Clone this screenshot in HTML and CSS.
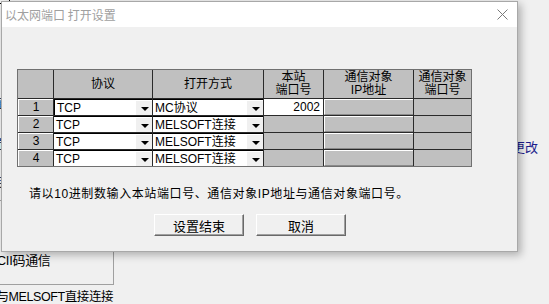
FILE: index.html
```html
<!DOCTYPE html>
<html lang="zh-CN">
<head>
    <meta charset="UTF-8">
    <title>以太网端口 打开设置</title>
    <link rel="stylesheet" href="styles.css">
</head>
<body>

<div class="desk">
    <span class="corner"></span>
    <span class="peek peek-a">值</span>
    <span class="peek peek-b">置</span>
    <span class="peek peek-c">连</span>
    <span class="peek peek-d">世</span>
    <div class="back-box"><span class="back-text">ASCII码通信</span></div>
    <div class="back-line">以太网上与MELSOFT直接连接</div>
    <span class="back-link">更改</span>
</div>

<div class="dialog">
    <div class="titlebar">
        <span class="title">以太网端口 打开设置</span>
        <svg class="close" width="11" height="11" viewBox="0 0 11 11">
            <path d="M0.5 0.5 L10.5 10.5 M10.5 0.5 L0.5 10.5" stroke="#7a7a7a" stroke-width="1" fill="none"/>
        </svg>
    </div>

    <div class="dialog-body">
        <div class="grid">
            <div class="hd"></div>
            <div class="hd">协议</div>
            <div class="hd">打开方式</div>
            <div class="hd two">本站<br>端口号</div>
            <div class="hd two">通信对象<br>IP地址</div>
            <div class="hd two">通信对象<br>端口号</div>

            <div class="num">1</div>
            <div class="combo focus"><span>TCP</span><i class="arrow"></i></div>
            <div class="combo"><span>MC协议</span><i class="arrow"></i></div>
            <div class="port">2002</div>
            <div class="raised"></div>
            <div class="flat"></div>

            <div class="num">2</div>
            <div class="combo"><span>TCP</span><i class="arrow"></i></div>
            <div class="combo"><span>MELSOFT连接</span><i class="arrow"></i></div>
            <div class="flat"></div>
            <div class="raised"></div>
            <div class="flat"></div>

            <div class="num">3</div>
            <div class="combo"><span>TCP</span><i class="arrow"></i></div>
            <div class="combo"><span>MELSOFT连接</span><i class="arrow"></i></div>
            <div class="flat"></div>
            <div class="raised"></div>
            <div class="flat"></div>

            <div class="num">4</div>
            <div class="combo"><span>TCP</span><i class="arrow"></i></div>
            <div class="combo"><span>MELSOFT连接</span><i class="arrow"></i></div>
            <div class="flat"></div>
            <div class="raised"></div>
            <div class="flat"></div>
        </div>

        <p class="hint">请以10进制数输入本站端口号、通信对象IP地址与通信对象端口号。</p>

        <div class="actions">
            <button type="button" class="btn">设置结束</button>
            <button type="button" class="btn">取消</button>
        </div>
    </div>
</div>

</body>
</html>
```

FILE: styles.css
```css
body {
    margin: 0;
    padding: 1px;
    width: 549px;
    height: 304px;
    box-sizing: border-box;
    overflow: hidden;
    background-color: #f0f0f0;
    font-family: "Liberation Sans", "Noto Sans CJK SC", sans-serif;
    font-size: 12px;
    color: #000;
    position: relative;
}

/* window lying behind the dialog */
.desk {
    position: absolute;
    left: 0;
    top: 0;
    width: 549px;
    height: 304px;
}
.corner {
    position: absolute;
    left: 0;
    top: 0;
    width: 9px;
    height: 3px;
    border-bottom: 1px solid #000;
    border-right: 1px solid #000;
}
.peek {
    position: absolute;
    left: -10px;
    line-height: 14px;
}
.peek-a { top: 97px; }
.peek-b { top: 138px; }
.peek-c { top: 176px; }
.peek-d { top: 218px; }
.back-box {
    position: absolute;
    left: -1px;
    top: 200px;
    width: 113px;
    height: 83px;
    border: 1px solid #a0a0a0;
    background-color: #f0f0f0;
}
.back-text {
    position: absolute;
    left: -20px;
    top: 52px;
    font-size: 13px;
    line-height: 15px;
    letter-spacing: -0.3px;
    white-space: nowrap;
}
.back-line {
    position: absolute;
    left: -52px;
    top: 290px;
    font-size: 12.5px;
    line-height: 15px;
    letter-spacing: -0.4px;
    white-space: nowrap;
}
.back-link {
    position: absolute;
    left: 512px;
    top: 140px;
    font-size: 13px;
    line-height: 16px;
    color: #1c1c8c;
}

/* dialog */
.dialog {
    position: relative;
    width: 517px;
    height: 251px;
    box-sizing: border-box;
    border: 1px solid #a8a8a8;
    background-color: #f0f0f0;
    box-shadow: 3px 3px 8px rgba(0, 0, 0, 0.28);
}
.titlebar {
    height: 25px;
    background-color: #fff;
    display: flex;
    align-items: center;
    justify-content: space-between;
    padding: 0 9px 0 3px;
}
.title {
    color: #a0a0a0;
    font-size: 12px;
    line-height: 14px;
    font-family: "Noto Sans CJK SC", sans-serif;
}
.close {
    display: block;
}
.dialog-body {
    padding: 42px 0 0 15px;
}

/* table */
.grid {
    display: grid;
    grid-template-columns: 35px 98px 110px 59px 89px 57px;
    grid-template-rows: 28px repeat(4, 16px);
    gap: 1px;
    width: 455px;
    box-sizing: border-box;
    border: 1px solid #707070;
    background-color: #2a2a2a;
}
.grid > div {
    background-color: #c0c0c0;
    line-height: 14px;
    overflow: hidden;
}
.hd {
    display: flex;
    align-items: center;
    justify-content: center;
    text-align: center;
    font-size: 12px;
}
.grid > .hd.two {
    line-height: 13px;
}
.grid > .num {
    text-align: center;
    line-height: 15px;
    border-top: 1px solid #fff;
    border-left: 1px solid #fff;
    box-sizing: border-box;
}
.grid > .combo {
    display: flex;
    align-items: center;
    background-color: #fff;
    border-top: 1px solid #000;
    box-sizing: border-box;
}
.grid > .combo.focus {
    border-left: 1px solid #000;
}
.combo span {
    flex: 1;
    padding-left: 2px;
    white-space: nowrap;
}
.arrow {
    width: 16px;
    height: 14px;
    background-color: #f0f0f0;
    position: relative;
}
.arrow::after {
    content: "";
    position: absolute;
    left: 5px;
    top: 6px;
    border-left: 4px solid transparent;
    border-right: 4px solid transparent;
    border-top: 4px solid #000;
}
.grid > .port {
    background-color: #fff;
    text-align: right;
    padding-right: 3px;
    line-height: 16px;
}
.raised {
    border-top: 1px solid #fff;
    border-left: 1px solid #fff;
    border-bottom: 1px solid #8a8a8a;
    box-sizing: border-box;
}

.hint {
    margin: 20px 0 0 12px;
    line-height: 14px;
    letter-spacing: 0.6px;
    white-space: nowrap;
}

.actions {
    display: flex;
    gap: 12px;
    margin: 13px 0 0 137px;
}
.btn {
    width: 90px;
    height: 22px;
    padding: 0;
    font-family: "Liberation Sans", "Noto Sans CJK SC", sans-serif;
    font-size: 13px;
    background-color: #f0f0f0;
    border-top: 1px solid #fff;
    border-left: 1px solid #fff;
    border-right: 1px solid #696969;
    border-bottom: 1px solid #696969;
    box-shadow: inset -1px -1px 0 #a0a0a0;
    color: #000;
}
```
